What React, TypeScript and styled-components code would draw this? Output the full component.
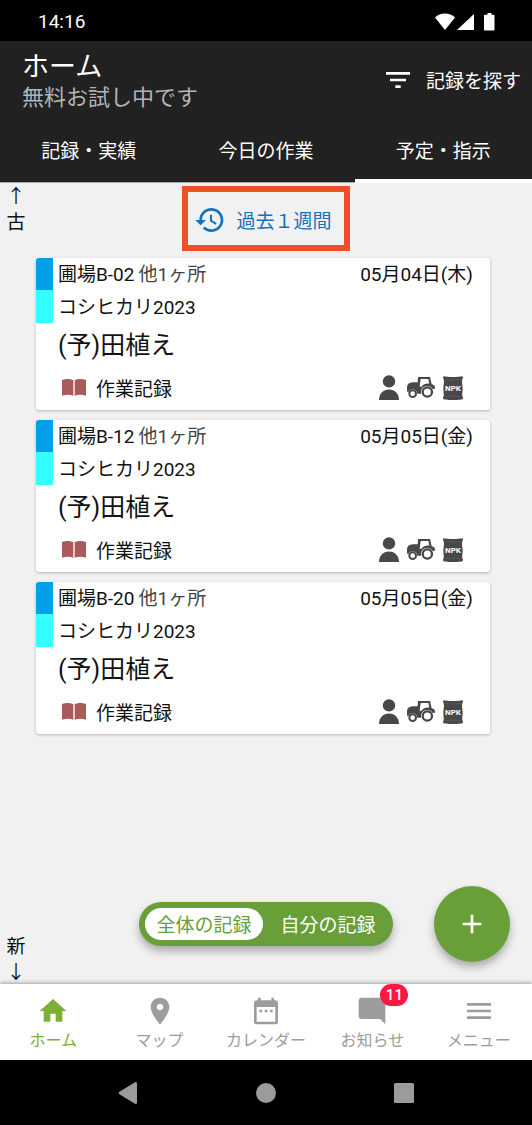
import React, { useState } from "react";
import styled, { createGlobalStyle } from "styled-components";

const latinFirst = `Roboto, "Noto Sans CJK JP", sans-serif`;

const GlobalStyle = createGlobalStyle`
  *, *::before, *::after { box-sizing: border-box; }
  body {
    margin: 0;
    background: #f1f1f1;
    font-family: "Noto Sans CJK JP", Roboto, sans-serif;
    font-size: 19px;
    line-height: 26px;
    color: #111;
  }
  button {
    font: inherit;
    color: inherit;
    border: 0;
    padding: 0;
    background: none;
    cursor: pointer;
  }
  a { color: inherit; text-decoration: none; }
  svg { display: block; flex: none; }
`;

const Screen = styled.div`
  min-height: 100vh;
  display: flex;
  flex-direction: column;
`;

const StatusBar = styled.div`
  height: 41px;
  padding: 2px 37px 0 38px;
  display: flex;
  align-items: center;
  justify-content: space-between;
  background: #000;
  color: #fff;
  font-family: ${latinFirst};
`;

const Header = styled.header`
  background: #212121;
  color: #fff;
`;

const TitleRow = styled.div`
  display: flex;
  align-items: center;
  justify-content: space-between;
  height: 77px;
  padding: 0 11px 0 22px;
`;

const TitleBlock = styled.div`
  padding-top: 5px;
  font-family: ${latinFirst};
`;

const Title = styled.h1`
  margin: 0;
  font-size: 27px;
  line-height: 32px;
  font-weight: 400;
`;

const Subtitle = styled.p`
  margin: 0;
  font-size: 22px;
  line-height: 30px;
  color: #b4b4b4;
`;

const SearchButton = styled.button`
  display: flex;
  align-items: center;
  gap: 12px;
`;

const Tabs = styled.div`
  display: grid;
  grid-template-columns: repeat(3, 1fr);
`;

const Tab = styled.button<{ $active: boolean }>`
  height: 64px;
  padding-top: 2px;
  border-bottom: 3px solid ${(p) => (p.$active ? "#fff" : "#212121")};
  box-shadow: 0 1px 0 ${(p) => (p.$active ? "#fff" : "#aaa")};
`;

const Main = styled.main`
  flex: 1;
  display: flex;
  flex-direction: column;
`;

const TopRow = styled.div`
  display: grid;
  grid-template-columns: 1fr auto 1fr;
  align-items: start;
  padding-bottom: 7px;
`;

const AgeMark = styled.div`
  width: 32px;
  display: flex;
  flex-direction: column;
  align-items: center;
`;

const RangeButton = styled.button`
  margin-top: 4px;
  height: 65px;
  padding: 3px 12px 0 6px;
  display: flex;
  align-items: center;
  gap: 10px;
  border: 6px solid #f04e29;
  color: #1273bd;
`;

const CardList = styled.ul`
  list-style: none;
  margin: 0;
  padding: 0 42px 0 36px;
  display: grid;
  gap: 10px;
`;

const Card = styled.li`
  display: flex;
  align-items: flex-start;
  background: #fff;
  border-radius: 3px;
  overflow: hidden;
  box-shadow: 0 1px 3px rgba(0, 0, 0, 0.26);
`;

const ColorStrip = styled.div`
  width: 17px;
  display: grid;
  grid-template-rows: 32px 33px;
`;

const Swatch = styled.span<{ $color: string }>`
  background: ${(p) => p.$color};
`;

const CardBody = styled.div`
  flex: 1;
  padding: 0 17px 4px 5px;
  font-family: ${latinFirst};
`;

const CardRow = styled.div<{ $height: number }>`
  display: flex;
  align-items: center;
  justify-content: space-between;
  height: ${(p) => p.$height}px;
  padding-top: 2px;
`;

const Others = styled.span`
  margin-left: 4px;
  color: #444;
`;

const Work = styled.h2`
  margin: 0;
  font-size: 25px;
  font-weight: 400;
`;

const RecordLabel = styled.span`
  display: flex;
  align-items: center;
  gap: 10px;
  padding-left: 4px;
  font-family: "Noto Sans CJK JP", sans-serif;
`;

const Resources = styled.span`
  display: flex;
  align-items: center;
  gap: 8px;
  padding-right: 10px;
  color: #484848;
`;

const Dock = styled.div`
  margin-top: auto;
  display: grid;
  grid-template-columns: 1fr auto 1fr;
  align-items: end;
`;

const Scope = styled.div`
  margin-bottom: 38px;
  height: 44px;
  padding: 6px;
  display: flex;
  gap: 6px;
  border-radius: 22px;
  background: #689f38;
  box-shadow: 0 5px 9px rgba(0, 0, 0, 0.3);
`;

const ScopeButton = styled.button<{ $active: boolean }>`
  width: 118px;
  border-radius: 16px;
  background: ${(p) => (p.$active ? "#fff" : "transparent")};
  color: ${(p) => (p.$active ? "#689f38" : "#fff")};
`;

const AddButton = styled.button`
  justify-self: end;
  margin: 0 22px 22px 0;
  width: 76px;
  height: 76px;
  display: grid;
  place-items: center;
  border-radius: 50%;
  background: #689f38;
  color: #fff;
  box-shadow: 0 5px 9px rgba(0, 0, 0, 0.3);
`;

const BottomNav = styled.nav`
  height: 76px;
  display: grid;
  grid-template-columns: repeat(5, 1fr);
  background: #fff;
  box-shadow: 0 -1px 4px rgba(0, 0, 0, 0.35);
`;

const NavLink = styled.a<{ $active: boolean }>`
  padding-top: 11px;
  display: flex;
  flex-direction: column;
  align-items: center;
  font-size: 16px;
  line-height: 24px;
  white-space: nowrap;
  && { color: ${(p) => (p.$active ? "#7cb034" : "#9c9c9c")}; }
`;

const NavIcon = styled.span`
  position: relative;
`;

const Badge = styled.span`
  position: absolute;
  top: -11px;
  left: 24px;
  width: 28px;
  height: 22px;
  border-radius: 11px;
  background: #ff1744;
  color: #fff;
  font-family: ${latinFirst};
  font-size: 15px;
  font-weight: 500;
  line-height: 22px;
  text-align: center;
`;

const SystemBar = styled.div`
  height: 65px;
  padding: 0 11%;
  display: grid;
  grid-template-columns: repeat(3, 1fr);
  place-items: center;
  background: #000;
  color: #9b9b9b;
`;

function MaterialIcon({ d, size = 32 }: { d: string; size?: number }) {
  return (
    <svg width={size} height={size} viewBox="0 0 24 24" fill="currentColor" aria-hidden="true">
      <path d={d} />
    </svg>
  );
}

const paths = {
  filter: "M10 18h4v-2h-4v2zM3 6v2h18V6H3zm3 7h12v-2H6v2z",
  history:
    "M13 3c-4.97 0-9 4.03-9 9H1l3.89 3.89.07.14L9 12H6c0-3.87 3.13-7 7-7s7 3.13 7 7-3.13 7-7 7c-1.93 0-3.68-.79-4.94-2.06l-1.42 1.42C8.27 19.99 10.51 21 13 21c4.97 0 9-4.03 9-9s-4.03-9-9-9zm-1 5v5l4.28 2.54.72-1.21-3.5-2.08V8H12z",
  add: "M19 13h-6v6h-2v-6H5v-2h6V5h2v6h6v2z",
  home: "M10 20v-6h4v6h5v-8h3L12 3 2 12h3v8z",
  place:
    "M12 2C8.13 2 5 5.13 5 9c0 5.25 7 13 7 13s7-7.75 7-13c0-3.87-3.13-7-7-7zm0 9.5c-1.38 0-2.5-1.12-2.5-2.5s1.12-2.5 2.5-2.5 2.5 1.12 2.5 2.5-1.12 2.5-2.5 2.5z",
  calendar:
    "M9 11H7v2h2v-2zm4 0h-2v2h2v-2zm4 0h-2v2h2v-2zm2-7h-1V2h-2v2H8V2H6v2H5c-1.11 0-1.99.9-1.99 2L3 20c0 1.1.89 2 2 2h14c1.1 0 2-.9 2-2V6c0-1.1-.9-2-2-2zm0 16H5V9h14v11z",
  comment: "M21.99 4c0-1.1-.89-2-1.99-2H4c-1.1 0-2 .9-2 2v12c0 1.1.9 2 2 2h14l4 4-.01-18z",
  menu: "M3 18h18v-2H3v2zm0-5h18v-2H3v2zm0-7v2h18V6H3z",
};

function StatusIcons() {
  return (
    <svg width="60" height="18" viewBox="0 0 60 18" fill="currentColor" aria-hidden="true">
      <path d="M0 4.500C5-.8 15-.8 20 4.500L10 17z" />
      <path d="M39 1v16H22z" />
      <path d="M52.500 0h4v1.700h2c.6 0 1 .4 1 1V16.500c0 .6-.4 1-1 1h-8.500c-.6 0-1-.4-1-1V2.700c0-.6.4-1 1-1h2.500z" />
    </svg>
  );
}

function PersonIcon() {
  return (
    <svg width="20" height="25" viewBox="0 0 20 25" fill="currentColor" role="img" aria-label="作業者">
      <circle cx="10" cy="6.4" r="6.2" />
      <path d="M0 25c0-6 4-10.500 10-10.500S20 19 20 25z" />
    </svg>
  );
}

function TractorIcon() {
  return (
    <svg width="28" height="21" viewBox="0 0 84 63" fill="currentColor" role="img" aria-label="農機">
      <path d="M33 0h37v5l4 17c5 1 9 4 10 7l-1 7h-6c-3-6-9-9-16-9-11 0-19 8-19 19v4H31c-1-8-6-13-14-13-6 0-11 3-13 9H2c-2-3-2-7-2-12 0-9 2-13 8-16 7-2 15-2 24-2z" />
      <path d="M41 6h23l3 14c-10-2-18 2-23 9h-6z" fill="#fff" />
      <circle cx="17" cy="50" r="10" fill="none" stroke="currentColor" strokeWidth="6" />
      <circle cx="61" cy="45" r="14" fill="none" stroke="currentColor" strokeWidth="7" />
    </svg>
  );
}

function FertilizerIcon() {
  return (
    <svg width="20" height="24" viewBox="0 0 60 72" role="img" aria-label="肥料">
      <path
        fill="currentColor"
        d="M2 1c10 3 46 3 56 0 3 3 2 7 0 9-2 9 0 15 1 26 0 11-2 16-1 25 2 3 3 6 0 9-11 3-45 3-56 0-3-3-2-6 0-9 1-9-1-14-1-25C2 25 4 19 2 10 0 8-1 4 2 1z"
      />
      <path d="M7 10c12 2 34 2 46 0M7 62c12-2 34-2 46 0" fill="none" stroke="#777" strokeWidth="1" />
      <text x="30" y="45" textAnchor="middle" fontFamily="Roboto, sans-serif" fontWeight="700" fontSize="24" fill="#fff">
        NPK
      </text>
    </svg>
  );
}

function BookIcon() {
  return (
    <svg width="24" height="17" viewBox="0 0 72 51" fill="#ab5a5c" aria-hidden="true">
      <path d="M0 3c10-4 25-4 34 1v46c-10-4-24-3-34 0z" />
      <path d="M38 4c9-5 24-5 34-1v47c-10-3-24-4-34 0z" />
    </svg>
  );
}

const records = [
  { field: "圃場B-02", date: "05月04日(木)" },
  { field: "圃場B-12", date: "05月05日(金)" },
  { field: "圃場B-20", date: "05月05日(金)" },
];

const tabs = ["記録・実績", "今日の作業", "予定・指示"];
const scopes = ["全体の記録", "自分の記録"];

const navItems = [
  { label: "ホーム", icon: paths.home },
  { label: "マップ", icon: paths.place },
  { label: "カレンダー", icon: paths.calendar },
  { label: "お知らせ", icon: paths.comment, badge: 11 },
  { label: "メニュー", icon: paths.menu },
];

export default function App() {
  const [tab, setTab] = useState(2);
  const [scope, setScope] = useState(0);

  return (
    <>
      <GlobalStyle />
      <Screen>
        <StatusBar>
          <span>14:16</span>
          <StatusIcons />
        </StatusBar>

        <Header>
          <TitleRow>
            <TitleBlock>
              <Title>ホーム</Title>
              <Subtitle>無料お試し中です</Subtitle>
            </TitleBlock>
            <SearchButton type="button">
              <MaterialIcon d={paths.filter} />
              記録を探す
            </SearchButton>
          </TitleRow>
          <Tabs role="tablist">
            {tabs.map((name, i) => (
              <Tab key={name} type="button" role="tab" aria-selected={i === tab} $active={i === tab} onClick={() => setTab(i)}>
                {name}
              </Tab>
            ))}
          </Tabs>
        </Header>

        <Main>
          <TopRow>
            <AgeMark>
              <span>↑</span>
              <span>古</span>
            </AgeMark>
            <RangeButton type="button">
              <MaterialIcon d={paths.history} />
              過去１週間
            </RangeButton>
          </TopRow>

          <CardList>
            {records.map((r) => (
              <Card key={r.field}>
                <ColorStrip>
                  <Swatch $color="#039fe8" />
                  <Swatch $color="#33ffff" />
                </ColorStrip>
                <CardBody>
                  <CardRow $height={32}>
                    <span>
                      {r.field}
                      <Others>他1ヶ所</Others>
                    </span>
                    <time>{r.date}</time>
                  </CardRow>
                  <CardRow $height={33}>コシヒカリ2023</CardRow>
                  <CardRow $height={44}>
                    <Work>(予)田植え</Work>
                  </CardRow>
                  <CardRow $height={39}>
                    <RecordLabel>
                      <BookIcon />
                      作業記録
                    </RecordLabel>
                    <Resources>
                      <PersonIcon />
                      <TractorIcon />
                      <FertilizerIcon />
                    </Resources>
                  </CardRow>
                </CardBody>
              </Card>
            ))}
          </CardList>

          <Dock>
            <AgeMark>
              <span>新</span>
              <span>↓</span>
            </AgeMark>
            <Scope>
              {scopes.map((name, i) => (
                <ScopeButton key={name} type="button" aria-pressed={i === scope} $active={i === scope} onClick={() => setScope(i)}>
                  {name}
                </ScopeButton>
              ))}
            </Scope>
            <AddButton type="button" aria-label="追加">
              <MaterialIcon d={paths.add} />
            </AddButton>
          </Dock>
        </Main>

        <BottomNav>
          {navItems.map((item, i) => (
            <NavLink key={item.label} href="#" $active={i === 0}>
              <NavIcon>
                <MaterialIcon d={item.icon} />
                {item.badge && <Badge>{item.badge}</Badge>}
              </NavIcon>
              {item.label}
            </NavLink>
          ))}
        </BottomNav>

        <SystemBar>
          <svg width="20" height="24" viewBox="0 0 20 24" fill="currentColor" aria-hidden="true">
            <path d="M1 11Q0 12 1 13L17 22.700Q19 23.500 19 21.500V2.500Q19 .5 17 1.300z" />
          </svg>
          <svg width="20" height="20" viewBox="0 0 20 20" fill="currentColor" aria-hidden="true">
            <circle cx="10" cy="10" r="10" />
          </svg>
          <svg width="20" height="20" viewBox="0 0 20 20" fill="currentColor" aria-hidden="true">
            <rect width="20" height="20" rx="1.500" />
          </svg>
        </SystemBar>
      </Screen>
    </>
  );
}
